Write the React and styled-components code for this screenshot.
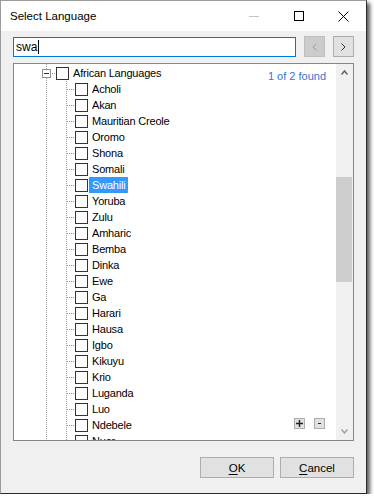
import React from 'react'
import styled, { createGlobalStyle } from 'styled-components'

const GlobalStyle = createGlobalStyle`
  html, body {
    margin: 0;
    padding: 0;
    background: #ffffff;
  }
  body {
    font-family: "Liberation Sans", Arial, sans-serif;
  }
`;

const Window = styled.div`
  width: 365px;
  background: #f0f0f0;
  border: 1px solid;
  border-color: #9c9c9c #2a2a2a #2a2a2a #9c9c9c;
  box-shadow: 3px 3px 4px rgba(0, 0, 0, 0.65);
`;

const TitleBar = styled.div`
  display: flex;
  align-items: center;
  height: 30px;
  background: #ffffff;
`;

const Title = styled.div`
  padding-left: 9px;
  font-size: 11.5px;
  color: #000;
`;

const Controls = styled.div`
  display: flex;
  margin-left: auto;
  height: 100%;
`;

const ControlButton = styled.div`
  width: 45px;
  height: 100%;
  display: flex;
  align-items: center;
  justify-content: center;
`;

const Body = styled.div`
  display: flex;
  flex-direction: column;
  padding: 5px 12px 15px 12px;
`;

const SearchRow = styled.div`
  display: flex;
  align-items: center;
  gap: 8px;
  height: 21px;
`;

const SearchBox = styled.div`
  flex: 1;
  height: 20px;
  box-sizing: border-box;
  border: 1px solid #0078d7;
  background: #fff;
  display: flex;
  align-items: center;
  padding-left: 2px;
  font-size: 12px;
  color: #000;
`;

const Caret = styled.span`
  display: inline-block;
  width: 1px;
  height: 14px;
  background: #000;
  margin-left: 1px;
`;

const NavButton = styled.div`
  width: 21px;
  height: 21px;
  box-sizing: border-box;
  display: flex;
  align-items: center;
  justify-content: center;
  background: ${({ disabled }) => (disabled ? '#cccccc' : '#e1e1e1')};
  border: 1px solid ${({ disabled }) => (disabled ? '#bfbfbf' : '#adadad')};
`;

const TreeBox = styled.div`
  margin-top: 6px;
  height: 378px;
  box-sizing: border-box;
  border: 1px solid #828790;
  background: #fff;
  display: flex;
`;

const Viewport = styled.div`
  position: relative;
  flex: 1;
  overflow: hidden;
`;

const Tree = styled.div`
  padding-top: 1px;
  font-size: 11px;
  color: #000;
  background-image: linear-gradient(#a0a0a0 50%, transparent 50%);
  background-size: 1px 2px;
  background-position: 32px 0;
  background-repeat: repeat-y;
  min-height: 100%;
`;

const ChildGroup = styled.div`
  background-image: linear-gradient(#a0a0a0 50%, transparent 50%);
  background-size: 1px 2px;
  background-position: 52px 0;
  background-repeat: repeat-y;
`;

const Row = styled.div`
  display: flex;
  align-items: center;
  height: 16px;
  padding-left: ${({ indent }) => indent}px;
`;

const Expander = styled.div`
  width: 9px;
  height: 9px;
  box-sizing: border-box;
  border: 1px solid #919191;
  background: #fff;
  display: flex;
  align-items: center;
  justify-content: center;
  &::after {
    content: '';
    width: 5px;
    height: 1px;
    background: #333;
  }
`;

const Connector = styled.div`
  width: ${({ w }) => w}px;
  height: 1px;
  background-image: linear-gradient(to right, #a0a0a0 50%, transparent 50%);
  background-size: 2px 1px;
  background-position: ${({ offset }) => offset}px 0;
`;

const Check = styled.div`
  width: 13px;
  height: 13px;
  box-sizing: border-box;
  border: 1px solid #333;
  background: #fff;
  flex-shrink: 0;
`;

const Label = styled.span`
  margin-left: 1px;
  padding: 0 3px;
  line-height: 16px;
  white-space: nowrap;
  letter-spacing: -0.2px;
  background: ${({ selected }) => (selected ? '#3399ff' : 'transparent')};
  color: ${({ selected }) => (selected ? '#fff' : '#000')};
`;

const FoundText = styled.div`
  position: absolute;
  top: 5px;
  right: 10px;
  font-size: 11px;
  line-height: 14px;
  color: #3874d8;
`;

const ZoomButtons = styled.div`
  position: absolute;
  right: 11px;
  bottom: 11px;
  display: flex;
  gap: 9px;
`;

const ZoomButton = styled.div`
  width: 11px;
  height: 11px;
  box-sizing: border-box;
  background: #e1e1e1;
  border: 1px solid #adadad;
  display: flex;
  align-items: center;
  justify-content: center;
`;

const ScrollBar = styled.div`
  width: 17px;
  background: #f0f0f0;
  display: flex;
  flex-direction: column;
`;

const ScrollArrow = styled.div`
  height: 17px;
  display: flex;
  align-items: center;
  justify-content: center;
`;

const Track = styled.div`
  flex: 1;
`;

const Thumb = styled.div`
  margin-top: 96px;
  margin-right: 1px;
  height: 105px;
  background: #cdcdcd;
`;

const Footer = styled.div`
  display: flex;
  justify-content: flex-end;
  gap: 6px;
  margin-top: 16px;
`;

const DialogButton = styled.div`
  width: 74px;
  height: 21px;
  box-sizing: border-box;
  background: #e1e1e1;
  border: 1px solid #adadad;
  display: flex;
  align-items: center;
  justify-content: center;
  font-size: 11.5px;
  color: #000;
  u {
    text-decoration: underline;
    text-underline-offset: 2px;
  }
`;

const languages = [
  'Acholi', 'Akan', 'Mauritian Creole', 'Oromo', 'Shona', 'Somali', 'Swahili',
  'Yoruba', 'Zulu', 'Amharic', 'Bemba', 'Dinka', 'Ewe', 'Ga', 'Harari', 'Hausa',
  'Igbo', 'Kikuyu', 'Krio', 'Luganda', 'Luo', 'Ndebele', 'Nuer',
];

export default function App() {
  return (
    <>
      <GlobalStyle />
      <Window>
        <TitleBar>
          <Title>Select Language</Title>
          <Controls>
            <ControlButton>
              <svg width="10" height="10" viewBox="0 0 10 10">
                <line x1="0" y1="5.5" x2="10" y2="5.5" stroke="#c4c4c4" strokeWidth="1" />
              </svg>
            </ControlButton>
            <ControlButton>
              <svg width="10" height="10" viewBox="0 0 10 10">
                <rect x="0.5" y="0.5" width="9" height="9" fill="none" stroke="#000" strokeWidth="1" />
              </svg>
            </ControlButton>
            <ControlButton>
              <svg width="11" height="11" viewBox="0 0 11 11">
                <path d="M0.5 0.5 L10.5 10.5 M10.5 0.5 L0.5 10.5" stroke="#000" strokeWidth="1" />
              </svg>
            </ControlButton>
          </Controls>
        </TitleBar>
        <Body>
          <SearchRow>
            <SearchBox>swa<Caret /></SearchBox>
            <NavButton disabled>
              <svg width="5" height="8" viewBox="0 0 5 8">
                <polyline points="4.5,0.5 1,4 4.5,7.5" fill="none" stroke="#9a9a9a" strokeWidth="1" />
              </svg>
            </NavButton>
            <NavButton>
              <svg width="5" height="8" viewBox="0 0 5 8">
                <polyline points="0.5,0.5 4,4 0.5,7.5" fill="none" stroke="#333" strokeWidth="1" />
              </svg>
            </NavButton>
          </SearchRow>
          <TreeBox>
            <Viewport>
              <Tree>
                <Row indent={28}>
                  <Expander />
                  <Connector w={5} offset={1} />
                  <Check />
                  <Label>African Languages</Label>
                </Row>
                <ChildGroup>
                  {languages.map((lang) => (
                    <Row key={lang} indent={53}>
                      <Connector w={8} offset={0} />
                      <Check />
                      <Label selected={lang === 'Swahili'}>{lang}</Label>
                    </Row>
                  ))}
                </ChildGroup>
              </Tree>
              <FoundText>1 of 2 found</FoundText>
              <ZoomButtons>
                <ZoomButton>
                  <svg width="7" height="7" viewBox="0 0 7 7">
                    <path d="M0 3.5 H7 M3.5 0 V7" stroke="#222" strokeWidth="1.4" />
                  </svg>
                </ZoomButton>
                <ZoomButton>
                  <svg width="3" height="1" viewBox="0 0 3 1">
                    <rect x="0" y="0" width="3" height="1" fill="#222" />
                  </svg>
                </ZoomButton>
              </ZoomButtons>
            </Viewport>
            <ScrollBar>
              <ScrollArrow>
                <svg width="7" height="5" viewBox="0 0 7 5">
                  <polyline points="0.5,4.5 3.5,1 6.5,4.5" fill="none" stroke="#606060" strokeWidth="1.5" />
                </svg>
              </ScrollArrow>
              <Track>
                <Thumb />
              </Track>
              <ScrollArrow>
                <svg width="7" height="5" viewBox="0 0 7 5">
                  <polyline points="0.5,0.5 3.5,4 6.5,0.5" fill="none" stroke="#a0a0a0" strokeWidth="1.5" />
                </svg>
              </ScrollArrow>
            </ScrollBar>
          </TreeBox>
          <Footer>
            <DialogButton><span><u>O</u>K</span></DialogButton>
            <DialogButton><span><u>C</u>ancel</span></DialogButton>
          </Footer>
        </Body>
      </Window>
    </>
  )
}
